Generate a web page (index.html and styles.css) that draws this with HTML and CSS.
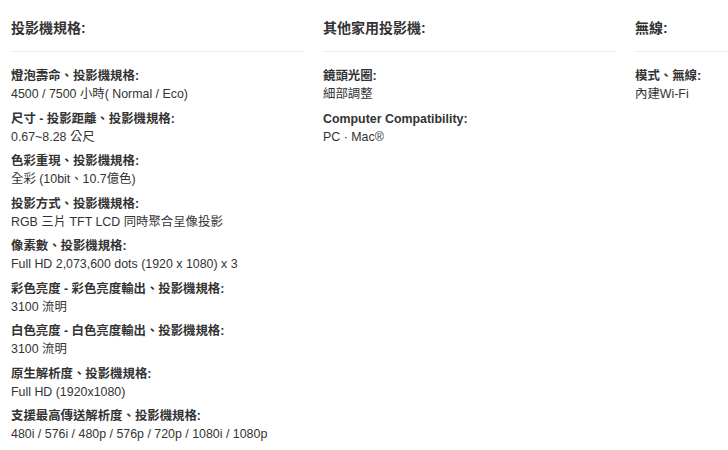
FILE: index.html
```html
<!DOCTYPE html>
<html lang="zh-Hant">
<head>
  <meta charset="UTF-8" />
  <meta name="viewport" content="width=device-width, initial-scale=1.0"/>
  <title>投影機規格</title>
  <link rel="stylesheet" href="styles.css">
</head>
<body>
  <main class="spec-grid">
    <section class="spec-group">
      <h3 class="spec-title">投影機規格:</h3>
      <dl class="spec-list">
        <div class="spec-item"><dt>燈泡壽命、投影機規格:</dt><dd>4500 / 7500 小時( Normal / Eco)</dd></div>
        <div class="spec-item"><dt>尺寸 - 投影距離、投影機規格:</dt><dd>0.67~8.28 公尺</dd></div>
        <div class="spec-item"><dt>色彩重現、投影機規格:</dt><dd>全彩 (10bit、10.7億色)</dd></div>
        <div class="spec-item"><dt>投影方式、投影機規格:</dt><dd>RGB 三片 TFT LCD 同時聚合呈像投影</dd></div>
        <div class="spec-item"><dt>像素數、投影機規格:</dt><dd>Full HD 2,073,600 dots (1920 x 1080) x 3</dd></div>
        <div class="spec-item"><dt>彩色亮度 - 彩色亮度輸出、投影機規格:</dt><dd>3100 流明</dd></div>
        <div class="spec-item"><dt>白色亮度 - 白色亮度輸出、投影機規格:</dt><dd>3100 流明</dd></div>
        <div class="spec-item"><dt>原生解析度、投影機規格:</dt><dd>Full HD (1920x1080)</dd></div>
        <div class="spec-item"><dt>支援最高傳送解析度、投影機規格:</dt><dd>480i / 576i / 480p / 576p / 720p / 1080i / 1080p</dd></div>
      </dl>
    </section>

    <section class="spec-group">
      <h3 class="spec-title">其他家用投影機:</h3>
      <dl class="spec-list">
        <div class="spec-item"><dt>鏡頭光圈:</dt><dd>細部調整</dd></div>
        <div class="spec-item"><dt>Computer Compatibility:</dt><dd>PC · Mac®</dd></div>
      </dl>
    </section>

    <section class="spec-group">
      <h3 class="spec-title">無線:</h3>
      <dl class="spec-list">
        <div class="spec-item"><dt>模式、無線:</dt><dd>內建Wi-Fi</dd></div>
      </dl>
    </section>
  </main>
</body>
</html>
```

FILE: styles.css
```css
body {
  margin: 0;
  background-color: white;
  color: #333;
  font-family: "Liberation Sans", "Noto Sans CJK TC", sans-serif;
  overflow: hidden;
}

.spec-grid {
  display: grid;
  grid-template-columns: 294px 294px 93px;
  column-gap: 18px;
  padding: 18px 0 0 11px;
}

.spec-title {
  margin: 0;
  font-size: 14px;
  line-height: 20px;
  font-weight: bold;
  padding-bottom: 13px;
  border-bottom: 1px solid #eeeeee;
}

.spec-list {
  margin: 15px 0 0;
}

.spec-item {
  margin-bottom: 6.5px;
}

.spec-item dt {
  font-size: 12.4px;
  line-height: 18px;
  font-weight: bold;
  white-space: nowrap;
}

.spec-item dd {
  margin: 0;
  font-size: 12.4px;
  line-height: 18px;
  white-space: nowrap;
}
```
